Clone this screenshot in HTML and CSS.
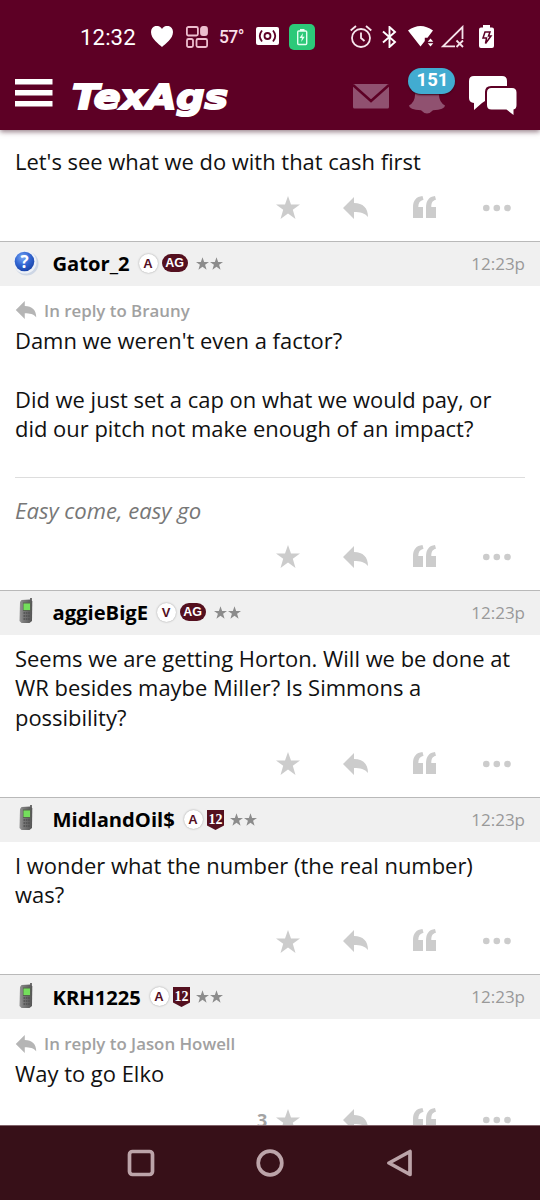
FILE: index.html
```html
<!DOCTYPE html>
<html lang="en">
<head>
<meta charset="utf-8">
<title>TexAgs</title>
<link rel="stylesheet" href="styles.css">
</head>
<body>
<svg class="defs" width="0" height="0">
  <defs>
    <radialGradient id="blue" cx=".4" cy=".3" r=".75"><stop offset="0" stop-color="#7ba8f2"/><stop offset=".5" stop-color="#3468d4"/><stop offset="1" stop-color="#1740a4"/></radialGradient>
    <linearGradient id="metal" x1="0" x2="1"><stop offset="0" stop-color="#969696"/><stop offset=".3" stop-color="#7b7b7b"/><stop offset="1" stop-color="#555"/></linearGradient>
    <symbol id="star" viewBox="0 0 24 23"><path d="M12 0l3 8.5h9l-7.2 5.3L19.5 23 12 17.5 4.5 23l2.7-9.200L0 8.500h9z"/></symbol>
    <symbol id="reply" viewBox="0 0 25 22"><path d="M0 11L11 0v6c9 0 14 5 14 14-3-4-8-5-14-5v7z"/></symbol>
    <symbol id="quote" viewBox="0 0 23 22"><path d="M9.500 0l1 3.700C7 4.500 5.300 6.800 5.300 11H10v11H0V11.500C0 4.500 3 .7 9.500 0zM22 0l1 3.700c-3.500.8-4.700 3.100-4.700 7.300H23v11H13V11.500C13 4.500 16 .7 22 0z"/></symbol>
    <symbol id="dots" viewBox="0 0 28 8"><circle cx="3.300" cy="4" r="3.300"/><circle cx="13.800" cy="4" r="3.300"/><circle cx="24.500" cy="4" r="3.300"/></symbol>
    <symbol id="phone" viewBox="0 0 16 26"><path d="M12 0h2v6h-2z" fill="#707070"/><path d="M3.500 2l9-.5L14.300 3.500 14 23l-2.500 2H3.500L1.500 23 2 4z" fill="url(#metal)"/><path d="M5 4.500h7.500V13H5z" fill="#56664f"/><path d="M5.500 5.500h6.500v6.500H5.500z" fill="#74df5c"/><path d="M5.500 15h6.500M5.500 18h6.500M5.500 21h6.500" stroke="#505050" stroke-width="1.500" stroke-dasharray="1.600 .7"/></symbol>
    <symbol id="shield" viewBox="0 0 17 20"><path d="M0 0h17v15.500L8.500 20 0 15.500z" fill="#54101f"/><text class="shield-text" x="8.500" y="13.500" text-anchor="middle" textLength="14" lengthAdjust="spacingAndGlyphs">12</text></symbol>
  </defs>
</svg>
<div class="screen">
  <header class="top">
    <div class="status">
      <span class="clock">12:32</span>
      <svg class="heart" width="22" height="21" viewBox="0 0 22 21"><path fill="#fff" d="M11 21C8 18 0 13 0 6 0-1 8-2 11 3c3-5 11-4 11 3 0 7-8 12-11 15z"/></svg>
      <svg class="grid" width="22" height="22" viewBox="0 0 22 22"><g fill="none" stroke="#edbdce" stroke-width="1.800"><rect x=".9" y="1" width="11" height="8.500" rx="1.500"/><rect x="15" y="1" width="6" height="8" rx="2" fill="#edbdce"/><rect x="1" y="13" width="6" height="8" rx="1.500"/><rect x="10.500" y="13" width="10.600" height="8" rx="1.500"/></g></svg>
      <span class="temp">57°</span>
      <svg class="cast" width="23" height="20" viewBox="0 0 23 20"><rect y="1" width="23" height="18" rx="2" fill="#fff"/><g fill="none" stroke="#5d0025" stroke-width="1.800"><circle cx="11.500" cy="10" r="3"/><path d="M6 4.500q-4.500 5.500 0 11M17 4.500q4.500 5.500 0 11"/></g></svg>
      <svg class="green" width="26" height="26" viewBox="0 0 26 26"><rect width="26" height="26" rx="5" fill="#2cc979"/><rect x="8.700" y="7" width="9" height="13.500" rx="1" fill="none" stroke="#e5fff2" stroke-width="1.400"/><path d="M11 5h4.500v2H11zM14 9l-3.500 5h2.400l-.7 4 3.500-5.200h-2.300z" fill="#e5fff2"/></svg>
      <svg class="alarm" width="22" height="23" viewBox="0 0 22 23"><g fill="none" stroke="#f7e6ed" stroke-width="1.800"><circle cx="11" cy="13" r="9"/><path d="M.7 5.500L6 1M16 1l5.300 4.500M11 7.500V13l3.500 3"/></g></svg>
      <svg class="bluetooth" width="15" height="22" viewBox="0 0 15 22"><path d="M1 5.500L13 16l-5.500 5V1L13 6 1 16.500" fill="none" stroke="#fff" stroke-width="1.900"/></svg>
      <svg class="wifi" width="26" height="21" viewBox="0 0 26 21"><path d="M0 4.500Q12.500-4.500 25 4.500l-5.500 7.200h-2.700v3.200L12.500 20.500z" fill="#fff"/><path d="M22.500 12.500l2.800 3.200h-5.600zM22.500 20.500l-2.800-3.200h5.600z" fill="#fff"/></svg>
      <svg class="signal" width="23" height="23" viewBox="0 0 23 23"><g fill="none" stroke="#f5e3ea" stroke-width="1.800"><path d="M14 21.300H2L21.500 2v12M15.500 15.500l6.500 6.500M22 15.500L15.500 22"/></g></svg>
      <svg class="battery" width="15" height="23" viewBox="0 0 15 23"><path d="M4 0h7v2.500h2q2 0 2 2V21q0 2-2 2H2q-2 0-2-2V4.500q0-2 2-2h2z" fill="#fff"/><path d="M6 7h5l-1.500 4H12l-5.500 7.500L7.500 13H4z" fill="none" stroke="#5d0025" stroke-width="1.500"/></svg>
    </div>
    <nav class="nav">
      <svg class="menu" width="38" height="28" viewBox="0 0 38 28"><path d="M0 0h37.500v5.500H0zM0 11h37.500v5.500H0zM0 22h37.500v5.500H0z" fill="#fff"/></svg>
      <svg class="logo" width="168" height="50" viewBox="0 0 168 50"><text x="2" y="36.500" textLength="156" lengthAdjust="spacingAndGlyphs">TexAgs</text></svg>
      <svg class="mail" width="36" height="25" viewBox="0 0 36 25"><rect width="36" height="24.500" rx="1.500" fill="#905170"/><path d="M0 1l18 16L36 1" fill="none" stroke="#5d0025" stroke-width="2.500"/></svg>
      <div class="alerts">
        <svg width="36" height="34" viewBox="0 0 36 34"><path d="M18 0C9 1 7 6 6 15q0 7-6 10.500 0 4 12 4.700 6 6.500 12 0 12-.7 12-4.700Q30 22 30 15C29 6 27 1 18 0z" fill="#905170"/></svg>
        <span class="count">151</span>
      </div>
      <svg class="chat" width="48" height="39" viewBox="0 0 48 39"><path d="M5 0h28q5 0 5 5v5H22q-6 0-6 6v9l-3 2-8 7V27q-5-.5-5-5V5q0-5 5-5z" fill="#fff"/><path d="M22.500 12H43q4.500 0 4.500 4.500V29q0 4-3 4.500V39l-7-5.500h-15q-4.500 0-4.500-4.500V16.500q0-4.500 4.500-4.500z" fill="#fff"/></svg>
    </nav>
  </header>
  <main class="thread">
    <article class="post first">
      <p class="text">Let's see what we do with that cash first</p>
      <div class="actions"><span class="likes"></span><svg class="star"><use href="#star"/></svg><svg class="reply"><use href="#reply"/></svg><svg class="quote"><use href="#quote"/></svg><svg class="dots"><use href="#dots"/></svg></div>
    </article>
    <article class="post">
      <div class="head">
        <div class="avatar"><svg width="26" height="26" viewBox="0 0 26 26"><circle cx="13.500" cy="13.500" r="12" fill="#cdd6e5"/><circle cx="12" cy="12" r="11.500" fill="#edf1f7"/><circle cx="11.500" cy="11.500" r="9.800" fill="url(#blue)"/><text class="question" x="11.500" y="18" text-anchor="middle">?</text></svg></div>
        <span class="name" style="width:77px">Gator_2</span><span class="round">A</span><span class="ag">AG</span><span class="rank"><svg><use href="#star"/></svg><svg><use href="#star"/></svg></span><time>12:23p</time>
      </div>
      <div class="body">
        <div class="context"><svg><use href="#reply"/></svg>In reply to Brauny</div>
        <p class="text">Damn we weren't even a factor?<br><br>Did we just set a cap on what we would pay, or<br>did our pitch not make enough of an impact?</p>
        <p class="signature">Easy come, easy go</p>
      </div>
      <div class="actions"><span class="likes"></span><svg class="star"><use href="#star"/></svg><svg class="reply"><use href="#reply"/></svg><svg class="quote"><use href="#quote"/></svg><svg class="dots"><use href="#dots"/></svg></div>
    </article>
    <article class="post">
      <div class="head">
        <div class="avatar"><svg class="phone"><use href="#phone"/></svg></div>
        <span class="name" style="width:95px">aggieBigE</span><span class="round">V</span><span class="ag">AG</span><span class="rank"><svg><use href="#star"/></svg><svg><use href="#star"/></svg></span><time>12:23p</time>
      </div>
      <div class="body"><p class="text">Seems we are getting Horton. Will we be done at<br>WR besides maybe Miller? Is Simmons a<br>possibility?</p></div>
      <div class="actions"><span class="likes"></span><svg class="star"><use href="#star"/></svg><svg class="reply"><use href="#reply"/></svg><svg class="quote"><use href="#quote"/></svg><svg class="dots"><use href="#dots"/></svg></div>
    </article>
    <article class="post">
      <div class="head">
        <div class="avatar"><svg class="phone"><use href="#phone"/></svg></div>
        <span class="name" style="width:122px">MidlandOil$</span><span class="round">A</span><svg class="shield"><use href="#shield"/></svg><span class="rank tight"><svg><use href="#star"/></svg><svg><use href="#star"/></svg></span><time>12:23p</time>
      </div>
      <div class="body"><p class="text">I wonder what the number (the real number)<br>was?</p></div>
      <div class="actions"><span class="likes"></span><svg class="star"><use href="#star"/></svg><svg class="reply"><use href="#reply"/></svg><svg class="quote"><use href="#quote"/></svg><svg class="dots"><use href="#dots"/></svg></div>
    </article>
    <article class="post">
      <div class="head">
        <div class="avatar"><svg class="phone"><use href="#phone"/></svg></div>
        <span class="name" style="width:88px">KRH1225</span><span class="round">A</span><svg class="shield"><use href="#shield"/></svg><span class="rank tight"><svg><use href="#star"/></svg><svg><use href="#star"/></svg></span><time>12:23p</time>
      </div>
      <div class="body">
        <div class="context"><svg><use href="#reply"/></svg>In reply to Jason Howell</div>
        <p class="text">Way to go Elko</p>
      </div>
      <div class="actions"><span class="likes">3</span><svg class="star"><use href="#star"/></svg><svg class="reply"><use href="#reply"/></svg><svg class="quote"><use href="#quote"/></svg><svg class="dots"><use href="#dots"/></svg></div>
    </article>
  </main>
  <footer class="system">
    <svg width="28" height="28" viewBox="0 0 28 28"><rect x="2.500" y="2.500" width="23" height="23" rx="3" /></svg>
    <svg width="28" height="28" viewBox="0 0 28 28"><circle cx="14" cy="14" r="11.800"/></svg>
    <svg width="28" height="28" viewBox="0 0 28 28"><path d="M4 14L25 2.500v23z"/></svg>
  </footer>
</div>
</body>
</html>
```
FILE: styles.css
```css
* { box-sizing: border-box; }
body { margin: 0; background: #fff; font-family: "Open Sans", sans-serif; color: #111; }
svg { display: block; flex: none; }
.defs { position: absolute; }
p { margin: 0; }
.screen { width: 540px; height: 1200px; display: flex; flex-direction: column; overflow: hidden; }

.top { height: 130px; flex: none; background: #5d0025; box-shadow: 0 2px 5px rgba(70, 30, 45, .55); z-index: 1; padding-top: 15px; }
.status { height: 43px; display: flex; align-items: center; padding-left: 80px; font-family: Roboto, sans-serif; color: #fff; }
.clock { width: 71px; font-size: 22.2px; letter-spacing: .1px; }
.grid { margin-left: 13px; }
.temp { width: 37px; margin-left: 11px; font-size: 17.500px; font-weight: 500; letter-spacing: -.6px; color: #f9dfe8; }
.cast { margin-top: -1px; }
.green { margin-left: 10px; }
.alarm { margin-left: 35px; }
.bluetooth { margin-left: 10px; }
.wifi { margin-left: 11px; }
.signal { margin-left: 7px; }
.battery { margin-left: 15px; }
.nav { display: flex; height: 72px; align-items: flex-start; padding-left: 15px; }
.menu { margin-top: 21px; }
.logo { margin: 14px 0 0 17px; }
.logo text { font: italic 700 34px "DejaVu Sans", sans-serif; fill: #fff; stroke: #fff; stroke-width: 2px; }
.mail { margin: 26px 0 0 115px; }
.alerts { position: relative; margin: 22px 0 0 20px; }
.count { position: absolute; top: -12.5px; left: -1px; width: 47px; height: 26px; border-radius: 13px; background: #42acd1; color: #fff; font: 700 18.5px/25px Roboto, sans-serif; padding-left: 2px; text-align: center; box-shadow: 0 1px 2px #3c0018; }
.chat { margin: 18px 0 0 24px; }

.thread { height: 995px; flex: none; overflow: hidden; }
.first { padding-top: 16.6px; }
.head { height: 45px; display: flex; align-items: center; padding: 0 15px 1px 13px; background: #f0f0f0; border-top: 1px solid #b9b9b9; }
.avatar { width: 39.500px; }
.phone { width: 16px; height: 26px; margin-left: 5px; margin-top: -2px; }
.question { font: 700 17px "Open Sans", sans-serif; fill: #fff; }
.name { font-size: 20.2px; font-weight: 700; color: #000; white-space: nowrap; }
.round { width: 19px; height: 19px; margin-left: 9px; border-radius: 50%; background: #fff; box-shadow: 0 0 2px #999; text-align: center; font: 700 13px/19px "Liberation Sans", sans-serif; color: #54101f; }
.ag { width: 26px; height: 18px; margin-left: 4px; border-radius: 9px; background: #54101f; color: #fff; text-align: center; font: 700 12.500px/18px "Liberation Sans", sans-serif; }
.shield { width: 17px; height: 20px; margin-left: 4px; margin-top: 1px; }
.shield-text { font: 700 15px "Liberation Serif", serif; fill: #fff; }
.rank { display: flex; gap: 1px; margin-left: 8px; }
.rank svg { width: 13px; height: 13px; fill: #8c8c8c; }
.tight { margin-left: 6px; }
time { margin-left: auto; font-size: 17px; color: #999; }
.body { padding: 9px 15px 0; }
.text, .signature { font-size: 21.95px; line-height: 29.500px; white-space: nowrap; }
.first .text { padding-left: 15px; }
.context { height: 31px; display: flex; align-items: center; font-size: 16.85px; font-weight: 600; color: #a1a1a1; }
.context svg { width: 22px; height: 18px; margin-right: 7px; fill: #b5b5b5; }
.signature { margin-top: 33.5px; padding-top: 17.5px; border-top: 1px solid #ddd; font-size: 22.1px; font-style: italic; color: #777; }
.actions { height: 64.5px; display: flex; align-items: center; padding: 0 0 1px 257px; fill: #ccc; }
.likes { width: 18px; margin-right: 1px; font-size: 18px; line-height: 20px; font-weight: 700; color: #a3a3a3; }
.actions .star { width: 24px; height: 23px; }
.actions .reply { width: 25px; height: 22px; margin-left: 43px; }
.actions .quote { width: 23px; height: 22px; margin: -2px 0 0 45px; }
.actions .dots { width: 28px; height: 8px; margin-left: 47px; }

.system { height: 75px; flex: none; display: flex; align-items: center; gap: 101px; padding-left: 127px; background: #371018; border-top: 1px solid #806269; }
.system svg { fill: none; stroke: #bca4a9; stroke-width: 3.7px; stroke-linejoin: round; }
```
